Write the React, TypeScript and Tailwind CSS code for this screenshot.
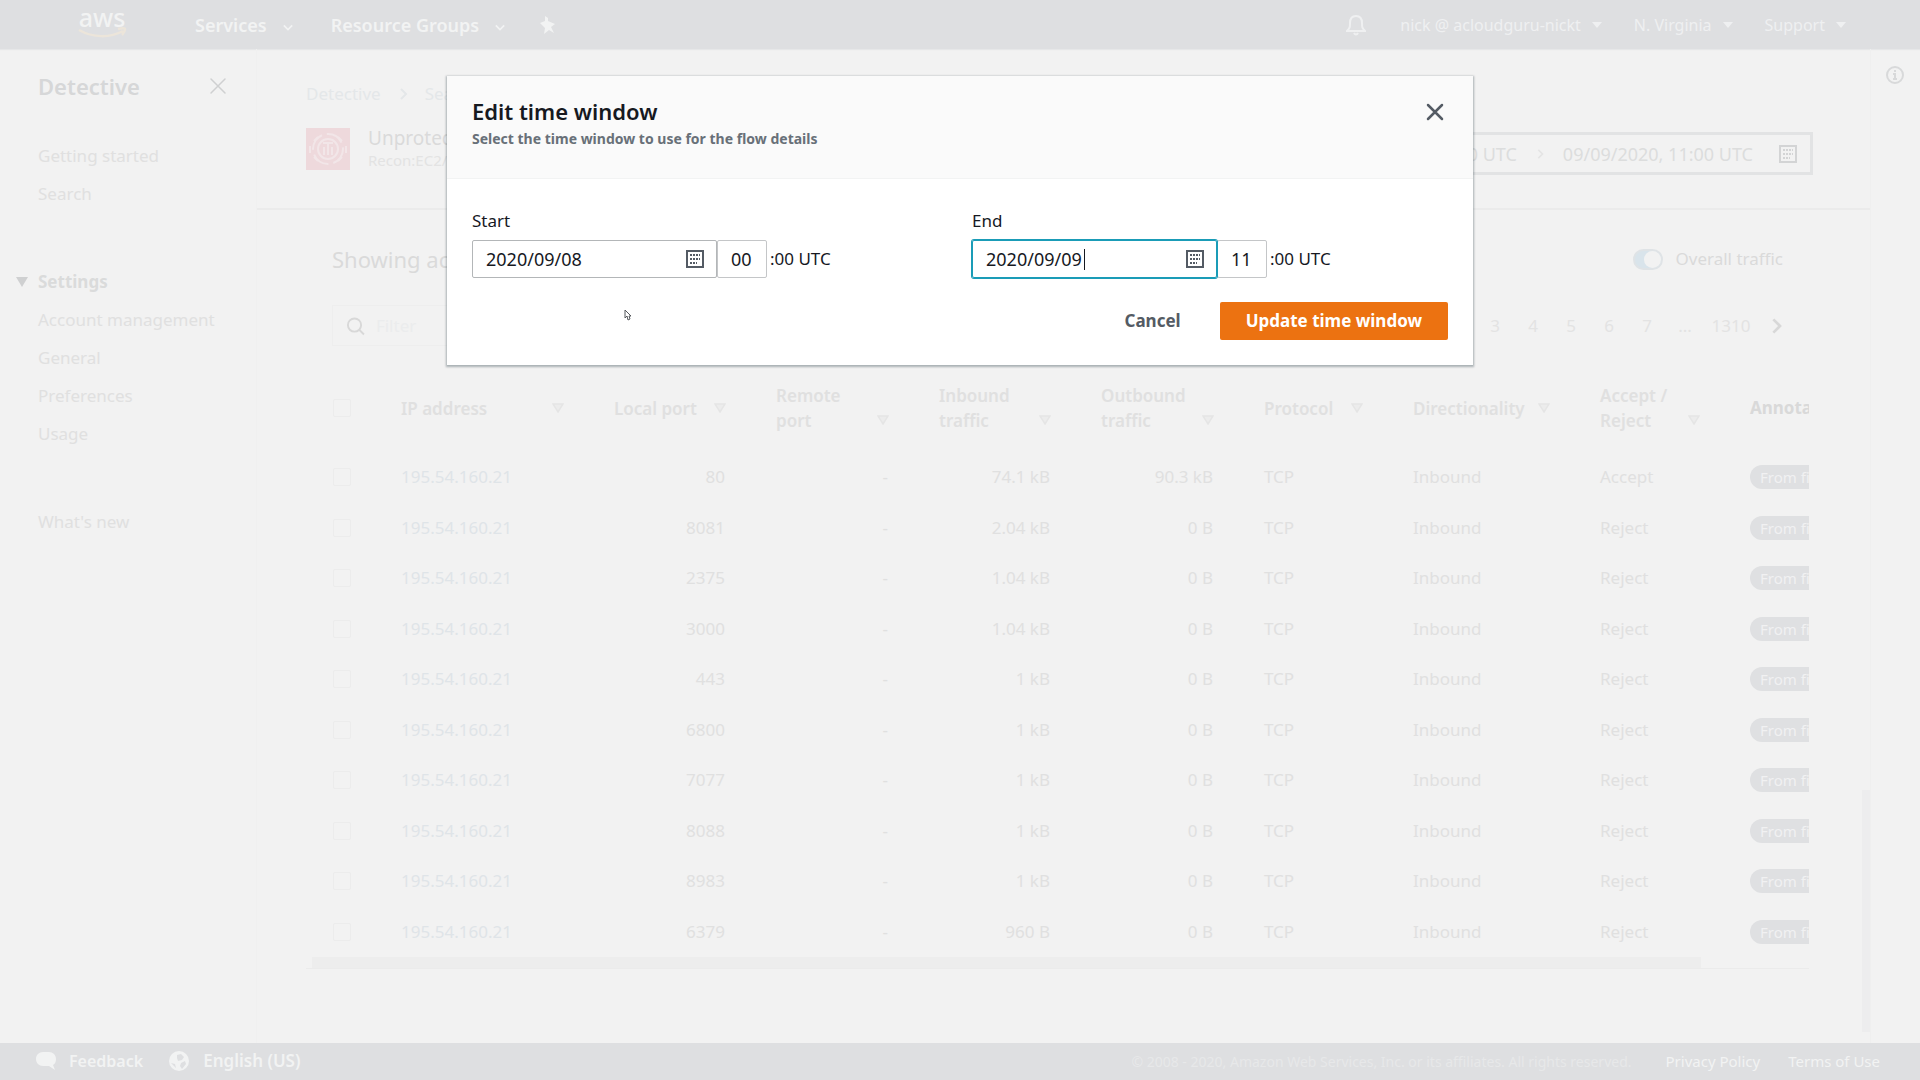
import type { ReactNode } from "react";

const rows = [
  ["80", "74.1 kB", "90.3 kB", "Accept"],
  ["8081", "2.04 kB", "0 B", "Reject"],
  ["2375", "1.04 kB", "0 B", "Reject"],
  ["3000", "1.04 kB", "0 B", "Reject"],
  ["443", "1 kB", "0 B", "Reject"],
  ["6800", "1 kB", "0 B", "Reject"],
  ["7077", "1 kB", "0 B", "Reject"],
  ["8088", "1 kB", "0 B", "Reject"],
  ["8983", "1 kB", "0 B", "Reject"],
  ["6379", "960 B", "0 B", "Reject"],
];

function CloseIcon({ className }: { className: string }) {
  return (
    <svg viewBox="0 0 18 18" className={className} fill="none" stroke="currentColor" strokeLinecap="round" aria-hidden="true">
      <path d="M2 2 16 16M16 2 2 16" />
    </svg>
  );
}

function CalendarIcon({ className }: { className: string }) {
  return (
    <svg viewBox="0 0 18 18" className={className} aria-hidden="true">
      <rect x="1" y="1" width="16" height="16" fill="none" stroke="currentColor" strokeWidth="2" />
      <path
        fill="currentColor"
        d="M4 4h2v2H4zM7 4h2v2H7zM10 4h2v2h-2zM13 4h1v2h-1zM4 8h2v2H4zM7 8h2v2H7zM10 8h2v2h-2zM13 8h1v2h-1zM4 12h2v2H4zM7 12h2v2H7zM10 12h1v2h-1z"
      />
    </svg>
  );
}

function Chevron({ className }: { className: string }) {
  return (
    <svg viewBox="0 0 12 12" className={className} fill="none" stroke="currentColor" strokeWidth="2" aria-hidden="true">
      <path d="M1 4l5 5 5-5" />
    </svg>
  );
}

function Caret() {
  return (
    <svg viewBox="0 0 10 6" className="h-[6px] w-[10px]" fill="currentColor" aria-hidden="true">
      <path d="M0 0h10L5 6z" />
    </svg>
  );
}

function TopBar() {
  return (
    <header className="flex h-[49px] items-center bg-[#dedfe1] pr-[74px] pl-[76px] text-[#f2f3f3] shadow-[0_1px_1px_#e6e7e8]">
      <a href="#home" aria-label="aws" className="flex w-[52px] flex-col items-center pb-1">
        <span className="text-[25px] leading-[20px] font-medium">aws</span>
        <svg viewBox="0 0 52 12" className="h-[12px] w-[52px]" fill="none" stroke="#ece5da" strokeWidth="2.5" aria-hidden="true">
          <path d="M3 3c14 8 31 8 44 1M42 2c4-1 7-1 7 0s-1 4-3 6" />
        </svg>
      </a>
      <nav className="ml-[67px] flex items-center text-lg font-semibold">
        <button className="flex items-center gap-4">
          Services <Chevron className="mt-1 size-[10px]" />
        </button>
        <button className="ml-[38px] flex items-center gap-4">
          Resource Groups <Chevron className="mt-1 size-[10px]" />
        </button>
        <button aria-label="Pin shortcuts" className="ml-[34px]">
          <svg viewBox="0 0 18 18" className="size-[18px]" fill="currentColor" aria-hidden="true">
            <path d="M6 0l3 2v3l7 3-4 3 3 6-5-3-5 4 1-6-5-5 5-2z" />
          </svg>
        </button>
      </nav>
      <div className="ml-auto flex items-center text-base text-[#eff0f1]">
        <button aria-label="Notifications" className="mr-[34px]">
          <svg viewBox="0 0 20 22" className="h-[22px] w-[20px]" fill="none" stroke="currentColor" strokeWidth="2" aria-hidden="true">
            <path d="M1 17h18c-3-3-3-4-3-8 0-5-2-7-6-7S4 4 4 9c0 4 0 5-3 8z" />
            <path d="M8 19c1 2 3 2 4 0" />
          </svg>
        </button>
        <button className="flex items-center gap-[11px]">
          nick @ acloudguru-nickt <Caret />
        </button>
        <button className="ml-8 flex items-center gap-[11px]">
          N. Virginia <Caret />
        </button>
        <button className="ml-8 flex items-center gap-[11px]">
          Support <Caret />
        </button>
      </div>
    </header>
  );
}

function SideLink({ children }: { children: ReactNode }) {
  return (
    <a href="#section" className="block leading-[38px]">
      {children}
    </a>
  );
}

function Sidebar() {
  return (
    <aside className="w-[257px] shrink-0 border-r border-[#f0f0f0] pt-5 pl-[38px] text-[17px] text-[#e0e0e0]">
      <div className="flex items-center justify-between pr-[29px]">
        <h2 className="text-[22px] leading-[34px] font-semibold text-[#d6d7d8]">Detective</h2>
        <button aria-label="Close navigation" className="text-[#cfd0d1]">
          <CloseIcon className="size-[18px] stroke-[1.5]" />
        </button>
      </div>
      <nav className="mt-[34px]">
        <SideLink>Getting started</SideLink>
        <SideLink>Search</SideLink>
        <button className="mt-[50px] -ml-[22px] flex items-center gap-[10px] leading-[38px] font-bold text-[#dadbdb]">
          <svg viewBox="0 0 12 10" className="h-[10px] w-[12px]" fill="#cfd0d1" aria-hidden="true">
            <path d="M0 0h12L6 10z" />
          </svg>
          Settings
        </button>
        <SideLink>Account management</SideLink>
        <SideLink>General</SideLink>
        <SideLink>Preferences</SideLink>
        <SideLink>Usage</SideLink>
        <div className="mt-[50px]">
          <SideLink>What's new</SideLink>
        </div>
      </nav>
    </aside>
  );
}

function ColumnHead({ children, bottom }: { children: ReactNode; bottom?: boolean }) {
  return (
    <th scope="col" className="px-[25px] text-left align-middle font-semibold">
      <div className={bottom ? "flex items-end justify-between" : "flex items-center justify-between"}>
        <span className={bottom ? "leading-[25px]" : "leading-[25px] whitespace-nowrap"}>{children}</span>
        <svg viewBox="0 0 12 10" className={bottom ? "mb-2 h-[10px] w-[12px] shrink-0" : "h-[10px] w-[12px] shrink-0"} fill="#ececec" stroke="#e5e5e5" strokeWidth="1.5" aria-hidden="true">
          <path d="M1 1h10L6 9z" />
        </svg>
      </div>
    </th>
  );
}

const box = "block size-[18px] appearance-none rounded-xs border border-[#ececec]";

function TrafficTable() {
  return (
    <div className="overflow-hidden">
      <table className="w-[1640px] table-fixed text-[17px] text-[#e0e0e0]">
        <colgroup>
          <col className="w-[70px]" />
          <col className="w-[213px]" />
          <col className="w-[162px]" />
          <col className="w-[163px]" />
          <col className="w-[162px]" />
          <col className="w-[163px]" />
          <col className="w-[149px]" />
          <col className="w-[187px]" />
          <col className="w-[150px]" />
          <col />
        </colgroup>
        <thead>
          <tr className="h-[88px]">
            <th scope="col" className="pl-[27px]">
              <input type="checkbox" aria-label="Select all rows" className={box} />
            </th>
            <ColumnHead>IP address</ColumnHead>
            <ColumnHead>Local port</ColumnHead>
            <ColumnHead bottom>Remote<br />port</ColumnHead>
            <ColumnHead bottom>Inbound<br />traffic</ColumnHead>
            <ColumnHead bottom>Outbound<br />traffic</ColumnHead>
            <ColumnHead>Protocol</ColumnHead>
            <ColumnHead>Directionality</ColumnHead>
            <ColumnHead bottom>Accept /<br />Reject</ColumnHead>
            <th scope="col" className="px-[25px] text-left font-bold text-[#d9d9d9]">Annotations</th>
          </tr>
        </thead>
        <tbody>
          {rows.map(([port, inbound, outbound, verdict]) => (
            <tr key={port} className="odd:h-[50px] even:h-[51px]">
              <td className="pl-[27px]">
                <input type="checkbox" aria-label={`Select port ${port}`} className={box} />
              </td>
              <td className="px-[25px]">
                <a href="#ip" className="text-[#dfe4e8]">195.54.160.21</a>
              </td>
              <td className="pr-[26px] text-right">{port}</td>
              <td className="pr-[26px] text-right">-</td>
              <td className="pr-[26px] text-right">{inbound}</td>
              <td className="pr-[26px] text-right">{outbound}</td>
              <td className="px-[25px]">TCP</td>
              <td className="px-[25px]">Inbound</td>
              <td className="px-[25px]">{verdict}</td>
              <td className="px-[25px]">
                <span className="inline-block rounded-full bg-[#dfe0e2] px-[10px] text-[15px] leading-[24px] text-[#f1f1f2]">From finding</span>
              </td>
            </tr>
          ))}
        </tbody>
      </table>
      <div className="border-b border-[#ebebeb]">
        <div className="mr-[108px] ml-[6px] h-[11px] bg-[#ededed]" />
      </div>
    </div>
  );
}

function Main() {
  return (
    <main className="relative min-w-0 flex-1 text-[#dadada]">
      <div className="border-b-2 border-[#ebebeb] pt-8 pr-[57px] pl-[49px]">
        <nav aria-label="Breadcrumb" className="flex items-center gap-4 text-[17px] leading-[26px] text-[#e4e7e9]">
          <a href="#detective">Detective</a>
          <Chevron className="size-[12px] -rotate-90" />
          <a href="#search">Search</a>
        </nav>
        <div className="mt-[21px] flex items-start pb-[33px]">
          <svg viewBox="0 0 44 42" className="h-[42px] w-[44px]" fill="none" stroke="#f2e6e8" strokeWidth="2" aria-hidden="true">
            <path d="M0 0h44v42H0z" fill="#eed9dc" stroke="none" />
            <circle cx="22" cy="21" r="15" strokeDasharray="18 5" />
            <circle cx="22" cy="21" r="10" />
            <path d="M17 15h10M22 15v12M18 19v8M26 19v8M4 18v7M40 18v7M12 9l-4 4M32 9l4 4M12 33l-4-4M32 33l4-4" />
          </svg>
          <div className="ml-[18px]">
            <h1 className="text-[19px] leading-[20px]">Unprotected port</h1>
            <p className="text-[15px] leading-[24px] text-[#e3e3e3]">Recon:EC2/PortProbe</p>
          </div>
          <button className="mt-[4px] ml-auto flex h-[43px] items-center border-[3px] border-[#e2e3e4] px-[13px] text-lg text-[#dcdddd]">
            09/08/2020, 00:00 UTC
            <Chevron className="mx-[18px] size-[10px] -rotate-90 text-[#e4e4e4]" />
            09/09/2020, 11:00 UTC
            <CalendarIcon className="ml-[26px] size-[18px] text-[#d3d4d5]" />
          </button>
        </div>
      </div>
      <section className="pt-[31px] pr-[61px] pl-[49px]">
        <div className="flex items-center justify-between pr-[26px] pl-[26px]">
          <h2 className="text-[22px] leading-[36px]">Showing activity</h2>
          <label className="flex items-center gap-3 text-[17px]">
            <span className="relative flex">
              <input type="checkbox" role="switch" defaultChecked className="h-[21px] w-[30px] appearance-none rounded-full border-2 border-[#dfe3e6] bg-[#d9e4eb]" />
              <span className="pointer-events-none absolute top-[2px] right-[2px] size-[17px] rounded-full bg-[#f2f2f2]" />
            </span>
            Overall traffic
          </label>
        </div>
        <div className="mt-7 flex items-center justify-between pr-[25px] pl-[26px]">
          <label className="flex h-[41px] w-[560px] items-center gap-[11px] border border-[#eeeeee] pl-[13px] text-[#d8d8d8]">
            <svg viewBox="0 0 20 20" className="size-[20px]" fill="none" stroke="currentColor" strokeWidth="2" aria-hidden="true">
              <circle cx="9" cy="9" r="7" />
              <path d="M14 14l5 5" />
            </svg>
            <input aria-label="Filter" placeholder="Filter" className="w-full bg-transparent text-[17px] placeholder:text-[#ebeced]" />
          </label>
          <nav aria-label="Pagination" className="flex items-center text-[17px] text-[#e3e3e3]">
            {["1", "2", "3", "4", "5", "6", "7", "..."].map((p) => (
              <button key={p} className="w-[38px]">{p}</button>
            ))}
            <button className="ml-1 w-[46px]">1310</button>
            <button aria-label="Next page" className="ml-[14px]">
              <Chevron className="size-[16px] -rotate-90 text-[#d8d8d8]" />
            </button>
          </nav>
        </div>
        <div className="mt-[18px]">
          <TrafficTable />
        </div>
      </section>
      <div className="absolute right-0 bottom-[11px] h-[242px] w-[8px] bg-[#ededee]" />
    </main>
  );
}

function Footer() {
  return (
    <footer className="flex h-[37px] items-center bg-[#dedfe1] pr-10 pb-px pl-[35px] text-base text-[#f2f3f3]">
      <button className="flex items-center gap-3 font-semibold">
        <svg viewBox="0 0 22 20" className="h-[20px] w-[22px]" fill="currentColor" aria-hidden="true">
          <path d="M8 1h6c4 0 7 3 7 7 0 3-1 5-3 6l2 5-6-4H8c-4 0-7-3-7-7s3-7 7-7z" />
        </svg>
        Feedback
      </button>
      <button className="ml-[26px] flex items-center gap-[14px] text-[17px] font-semibold">
        <svg viewBox="0 0 20 20" className="size-[20px]" aria-hidden="true">
          <circle cx="10" cy="10" r="10" fill="#f2f3f3" />
          <path d="M8 4l4-1 3 3-2 3-4 1-1-3zM12 12l4-2 1 3-4 5-2-3zM2 12l4 1 1 4z" fill="#dedfe1" />
        </svg>
        English (US)
      </button>
      <div className="ml-auto flex items-center text-[14px]">
        <span className="text-[#e7e8e9]">© 2008 - 2020, Amazon Web Services, Inc. or its affiliates. All rights reserved.</span>
        <a href="#privacy" className="ml-[34px] text-[15px]">Privacy Policy</a>
        <a href="#terms" className="ml-7 text-[15px]">Terms of Use</a>
      </div>
    </footer>
  );
}

function TimeField({ id, label, date, hour, active }: { id: string; label: string; date: string; hour: string; active?: boolean }) {
  return (
    <div className="flex-1">
      <label htmlFor={id} className="block text-[17px] leading-[25px]">{label}</label>
      <div className="mt-[7px] flex items-center text-lg">
        <div className="relative">
          <input
            id={id}
            defaultValue={date}
            className={
              active
                ? "block h-[38px] w-[245px] rounded-xs border border-[#1a9cb7] px-[13px] ring-1 ring-[#1a9cb7] outline-none"
                : "block h-[38px] w-[245px] rounded-xs border border-[#b3b6b8] px-[13px] outline-none"
            }
          />
          {active && <span className="absolute top-[9px] left-[112px] h-[21px] w-px bg-[#16191f]" />}
          <button type="button" aria-label={`Pick ${label.toLowerCase()} date`} className="absolute top-[10px] right-[13px] text-[#545b64]">
            <CalendarIcon className="size-[18px]" />
          </button>
        </div>
        <input aria-label={`${label} hour`} defaultValue={hour} className="h-[38px] w-[50px] rounded-xs border border-[#c4c6c8] px-[13px] outline-none" />
        <span className="ml-[3px] text-[17px]">:00 UTC</span>
      </div>
    </div>
  );
}

function EditDialog() {
  return (
    <div className="absolute inset-0 flex items-start justify-center pt-[76px]">
      <div role="dialog" aria-labelledby="dialog-title" className="relative w-[1026px] max-w-full bg-white text-[#16191f] shadow-[0_1px_2px_1px_rgba(0,28,36,0.3)]">
        <div className="flex h-[103px] items-start justify-between border-b border-[#f2f3f3] bg-[#fafafa] px-[25px] pt-5">
          <div>
            <h2 id="dialog-title" className="text-[22px] leading-[30px] font-semibold">Edit time window</h2>
            <p className="text-[14px] leading-[26px] font-bold text-[#687078]">Select the time window to use for the flow details</p>
          </div>
          <button aria-label="Close" className="mt-[7px] mr-[4px] text-[#545b64]">
            <CloseIcon className="size-[18px] stroke-[2.5]" />
          </button>
        </div>
        <form className="px-[25px] pt-[29px] pb-[25px]">
          <div className="flex gap-6">
            <TimeField id="start" label="Start" date="2020/09/08" hour="00" />
            <TimeField id="end" label="End" date="2020/09/09" hour="11" active />
          </div>
          <div className="mt-6 flex justify-end gap-[39px] text-[17px] font-bold">
            <button type="button" className="h-[38px] text-[#545b64]">Cancel</button>
            <button type="button" className="h-[38px] rounded-xs bg-[#ec7211] px-[26px] text-white">Update time window</button>
          </div>
        </form>
        <svg viewBox="0 0 8 12" className="absolute top-[233px] left-[177px] h-[12px] w-[8px]" fill="#fff" stroke="#55585c" aria-hidden="true">
          <path d="M1 1v8l2-2 1 4 2-1-1-3h2z" />
        </svg>
      </div>
    </div>
  );
}

export default function App() {
  return (
    <div className="relative flex min-h-screen flex-col bg-[#f2f2f2] font-['Noto_Sans',sans-serif]">
      <TopBar />
      <div className="flex flex-1">
        <Sidebar />
        <Main />
        <aside className="w-[50px] shrink-0 border-l border-[#efefef] pt-4 pl-[14px]">
          <button aria-label="Info" className="text-[#d8d9da]">
            <svg viewBox="0 0 20 20" className="size-[20px]" fill="none" stroke="currentColor" strokeWidth="2" aria-hidden="true">
              <circle cx="10" cy="10" r="8" />
              <path d="M10 5v2M8 9h2v5M8 14h4" />
            </svg>
          </button>
        </aside>
      </div>
      <Footer />
      <EditDialog />
    </div>
  );
}
